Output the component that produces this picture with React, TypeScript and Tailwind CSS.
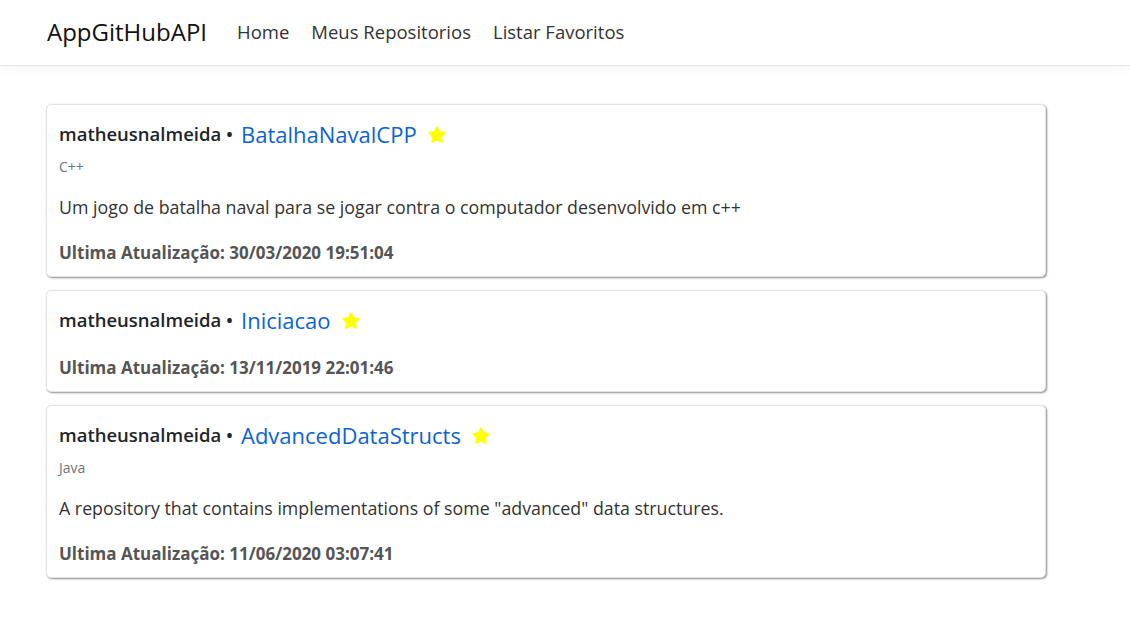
import { Star } from "lucide-react";

type Repo = {
  owner: string;
  name: string;
  language?: string;
  description?: string;
  updated: string;
};

const repos: Repo[] = [
  {
    owner: "matheusnalmeida",
    name: "BatalhaNavalCPP",
    language: "C++",
    description:
      "Um jogo de batalha naval para se jogar contra o computador desenvolvido em c++",
    updated: "30/03/2020 19:51:04",
  },
  {
    owner: "matheusnalmeida",
    name: "Iniciacao",
    updated: "13/11/2019 22:01:46",
  },
  {
    owner: "matheusnalmeida",
    name: "AdvancedDataStructs",
    language: "Java",
    description:
      'A repository that contains implementations of some "advanced" data structures.',
    updated: "11/06/2020 03:07:41",
  },
];

function RepoCard({ repo }: { repo: Repo }) {
  return (
    <div className="rounded-[5px] border border-[#e3e3e3] bg-white pl-3 pr-[13px] pt-[15px] pb-[11px] shadow-[1px_1px_2px_rgba(0,0,0,0.45)]">
      <div className="flex h-7 items-center leading-7">
        <span className="text-[18.5px] font-semibold text-[#212529]">
          {repo.owner} •
        </span>
        <a href="#" className="ml-2 text-[22px] text-[#0b63d3]">
          {repo.name}
        </a>
        <Star
          className="ml-[10px] mt-[2px]"
          size={20}
          fill="#ffff00"
          color="#ffff00"
          strokeWidth={1}
        />
      </div>
      {repo.language && (
        <div className="mt-[9px] text-[14px] leading-5 text-[#6c757d]">
          {repo.language}
        </div>
      )}
      {repo.description && (
        <p className="mt-[18px] text-[17.8px] leading-6 text-[#333]">
          {repo.description}
        </p>
      )}
      <div className="mt-[22px] text-[17px] font-bold leading-6 text-[#555]">
        Ultima Atualização: {repo.updated}
      </div>
    </div>
  );
}

export default function App() {
  return (
    <div
      className="min-h-screen bg-white"
      style={{ fontFamily: '"Open Sans", "Noto Sans", sans-serif' }}
    >
      <nav className="flex h-[66px] items-center border-b border-[#e6e6e6] bg-white pl-[47px] pb-[2px] shadow-[0_2px_14px_rgba(0,0,0,0.05)]">
        <span className="text-[24px] text-[#111]">AppGitHubAPI</span>
        <div className="ml-[30px] flex gap-[22px] text-[18.5px] text-[#333]">
          <a href="#">Home</a>
          <a href="#">Meus Repositorios</a>
          <a href="#">Listar Favoritos</a>
        </div>
      </nav>
      <main className="ml-[46px] flex w-[1000px] flex-col gap-[13px] pt-[38px]">
        {repos.map((r) => (
          <RepoCard key={r.name} repo={r} />
        ))}
      </main>
    </div>
  );
}
